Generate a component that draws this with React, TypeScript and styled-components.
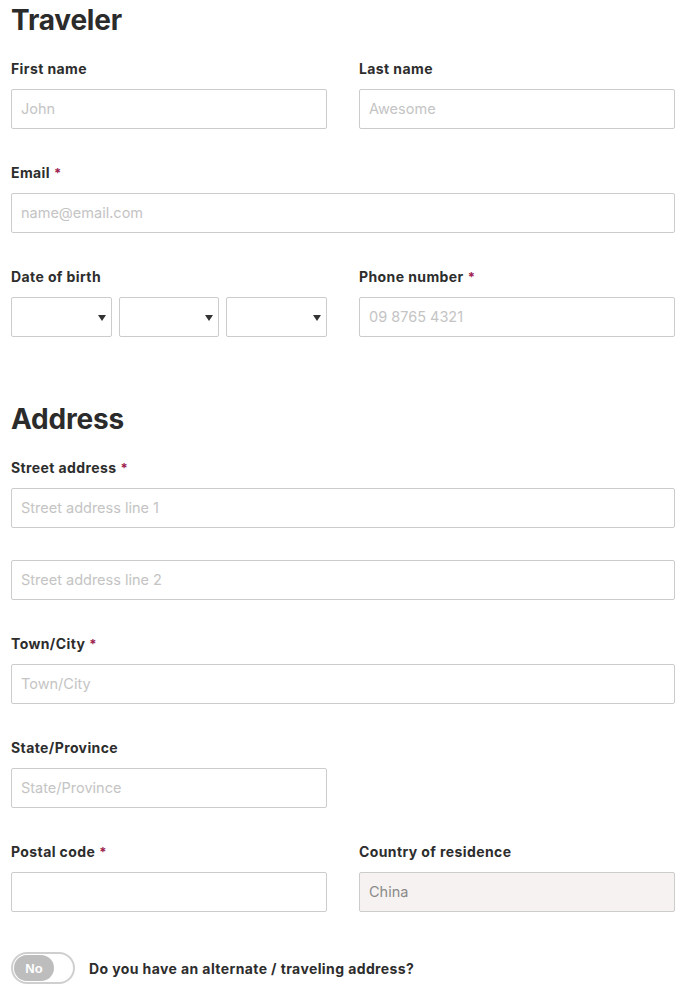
import React from "react";
import styled, { createGlobalStyle } from "styled-components";

const Global = createGlobalStyle`
  html, body { margin: 0; padding: 0; background: #fff; }
  body { font-family: Inter, "Open Sans", "Liberation Sans", sans-serif; color: #2d2d2d; }
  * { box-sizing: border-box; }
`;

const Page = styled.form`
  width: 686px;
  padding: 0 11px 0 11px;
  display: flex;
  flex-direction: column;
`;

const Section = styled.section<{ $top?: number }>`
  display: flex;
  flex-direction: column;
  gap: 34px;
  margin-top: ${(p) => p.$top ?? 0}px;
`;

const Heading = styled.h2`
  margin: 3px 0 -12px 0;
  font-size: 28px;
  line-height: 34px;
  font-weight: 700;
  color: #2b2b2b;
  letter-spacing: -0.2px;
`;

const Row = styled.div<{ $cols?: number }>`
  display: grid;
  grid-template-columns: ${(p) => (p.$cols === 2 ? "1fr 1fr" : "1fr")};
  column-gap: 32px;
`;

const HalfRow = styled.div`
  display: grid;
  grid-template-columns: 316px;
`;

const Field = styled.div`
  display: flex;
  flex-direction: column;
  gap: 10px;
`;

const Stack = styled.div`
  display: flex;
  flex-direction: column;
  gap: 32px;
`;

const Label = styled.label`
  font-size: 14px;
  line-height: 20px;
  font-weight: 700;
  letter-spacing: 0.4px;
  color: #2d2d2d;
`;

const Req = styled.span`
  color: #9e1f50;
  margin-left: 4px;
  font-size: 13px;
  vertical-align: top;
`;

const Input = styled.input<{ $disabledLook?: boolean }>`
  height: 40px;
  width: 100%;
  border: 1px solid #cccccc;
  border-radius: 2px;
  padding: 0 9px 1px 9px;
  font-family: inherit;
  font-size: 14.5px;
  color: ${(p) => (p.$disabledLook ? "#8a8a8a" : "#333")};
  background: ${(p) => (p.$disabledLook ? "#f6f2f1" : "#fff")};
  outline: none;
  &::placeholder { color: #c4c4c4; }
`;

const DateRow = styled.div`
  display: grid;
  grid-template-columns: 1fr 1fr 1fr;
  column-gap: 7px;
`;

const SelectWrap = styled.div`
  position: relative;
  height: 40px;
  &::after {
    content: "";
    position: absolute;
    right: 6px;
    top: 18px;
    border-left: 4.5px solid transparent;
    border-right: 4.5px solid transparent;
    border-top: 6px solid #333;
    pointer-events: none;
  }
`;

const Select = styled.select`
  appearance: none;
  -webkit-appearance: none;
  width: 100%;
  height: 40px;
  border: 1px solid #cccccc;
  border-radius: 2px;
  background: #fff;
  font-family: inherit;
  font-size: 14px;
  padding: 0 9px;
  outline: none;
`;

const ToggleRow = styled.div`
  display: flex;
  align-items: center;
  gap: 14px;
  margin-top: 40px;
`;

const Toggle = styled.button`
  width: 64px;
  height: 32px;
  border: 2px solid #cfcfcf;
  border-radius: 16px;
  background: #fff;
  padding: 1px;
  display: flex;
  align-items: center;
  cursor: pointer;
`;

const Knob = styled.span`
  width: 40px;
  height: 26px;
  border-radius: 13px;
  background: #bdbdbd;
  color: #fff;
  font-family: inherit;
  font-weight: 700;
  font-size: 13px;
  display: flex;
  align-items: center;
  justify-content: center;
`;

const ToggleText = styled.span`
  font-size: 14px;
  font-weight: 700;
  letter-spacing: 0.4px;
  color: #2d2d2d;
`;

function Req_() {
  return <Req>*</Req>;
}

export default function App() {
  return (
    <>
      <Global />
      <Page onSubmit={(e) => e.preventDefault()}>
        <Section>
          <Heading>Traveler</Heading>
          <Row $cols={2}>
            <Field>
              <Label>First name</Label>
              <Input placeholder="John" />
            </Field>
            <Field>
              <Label>Last name</Label>
              <Input placeholder="Awesome" />
            </Field>
          </Row>
          <Field>
            <Label>
              Email<Req_ />
            </Label>
            <Input placeholder="name@email.com" />
          </Field>
          <Row $cols={2}>
            <Field>
              <Label>Date of birth</Label>
              <DateRow>
                <SelectWrap>
                  <Select defaultValue="">
                    <option value=""></option>
                  </Select>
                </SelectWrap>
                <SelectWrap>
                  <Select defaultValue="">
                    <option value=""></option>
                  </Select>
                </SelectWrap>
                <SelectWrap>
                  <Select defaultValue="">
                    <option value=""></option>
                  </Select>
                </SelectWrap>
              </DateRow>
            </Field>
            <Field>
              <Label>
                Phone number<Req_ />
              </Label>
              <Input placeholder="09 8765 4321" />
            </Field>
          </Row>
        </Section>

        <Section $top={62}>
          <Heading>Address</Heading>
          <Field>
            <Label>
              Street address<Req_ />
            </Label>
            <Stack>
              <Input placeholder="Street address line 1" />
              <Input placeholder="Street address line 2" />
            </Stack>
          </Field>
          <Field>
            <Label>
              Town/City<Req_ />
            </Label>
            <Input placeholder="Town/City" />
          </Field>
          <HalfRow>
            <Field>
              <Label>State/Province</Label>
              <Input placeholder="State/Province" />
            </Field>
          </HalfRow>
          <Row $cols={2}>
            <Field>
              <Label>
                Postal code<Req_ />
              </Label>
              <Input />
            </Field>
            <Field>
              <Label>Country of residence</Label>
              <Input $disabledLook readOnly value="China" />
            </Field>
          </Row>
        </Section>

        <ToggleRow>
          <Toggle type="button">
            <Knob>No</Knob>
          </Toggle>
          <ToggleText>Do you have an alternate / traveling address?</ToggleText>
        </ToggleRow>
      </Page>
    </>
  );
}
